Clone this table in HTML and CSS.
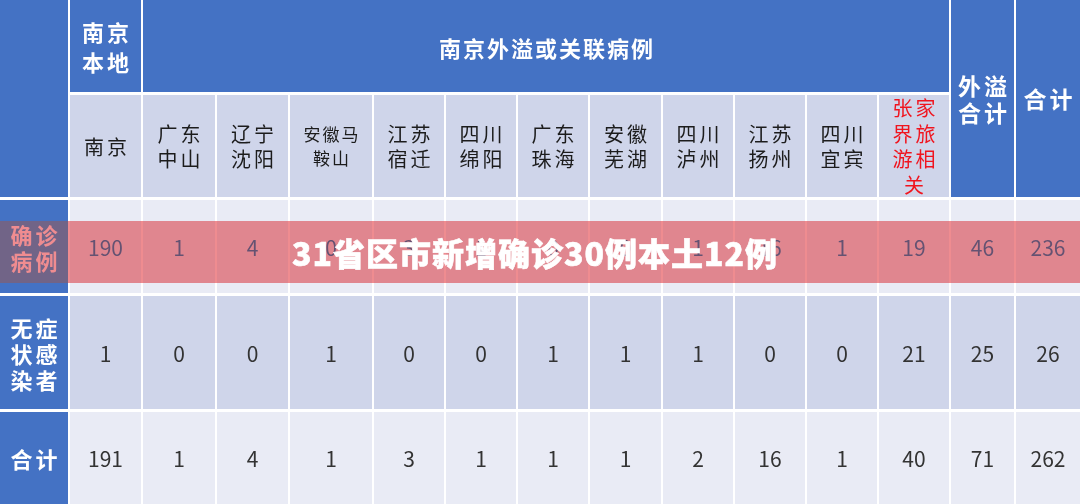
FILE: index.html
```html
<!DOCTYPE html>
<html lang="zh-CN">
<head>
<meta charset="utf-8">
<title>31省区市新增确诊30例本土12例</title>
<link rel="stylesheet" href="styles.css">
</head>
<body>
<div class="stage">
  <div class="table">
    <div class="cell blue corner"></div>
    <div class="cell blue hd">南京<br>本地</div>
    <div class="cell blue hd wide">南京外溢或关联病例</div>
    <div class="cell blue hd tall c14">外溢<br>合计</div>
    <div class="cell blue hd tall c15">合计</div>

    <div class="cell lav sub">南京</div>
    <div class="cell lav sub">广东<br>中山</div>
    <div class="cell lav sub">辽宁<br>沈阳</div>
    <div class="cell lav sub small">安徽马<br>鞍山</div>
    <div class="cell lav sub">江苏<br>宿迁</div>
    <div class="cell lav sub">四川<br>绵阳</div>
    <div class="cell lav sub">广东<br>珠海</div>
    <div class="cell lav sub">安徽<br>芜湖</div>
    <div class="cell lav sub">四川<br>泸州</div>
    <div class="cell lav sub">江苏<br>扬州</div>
    <div class="cell lav sub">四川<br>宜宾</div>
    <div class="cell lav sub red">张家<br>界旅<br>游相<br>关</div>

    <div class="cell blue rh">确诊<br>病例</div>
    <div class="cell light num">190</div>
    <div class="cell light num">1</div>
    <div class="cell light num">4</div>
    <div class="cell light num">0</div>
    <div class="cell light num">3</div>
    <div class="cell light num">1</div>
    <div class="cell light num">0</div>
    <div class="cell light num">0</div>
    <div class="cell light num">1</div>
    <div class="cell light num">16</div>
    <div class="cell light num">1</div>
    <div class="cell light num">19</div>
    <div class="cell light num">46</div>
    <div class="cell light num">236</div>

    <div class="cell blue rh">无症<br>状感<br>染者</div>
    <div class="cell lav num">1</div>
    <div class="cell lav num">0</div>
    <div class="cell lav num">0</div>
    <div class="cell lav num">1</div>
    <div class="cell lav num">0</div>
    <div class="cell lav num">0</div>
    <div class="cell lav num">1</div>
    <div class="cell lav num">1</div>
    <div class="cell lav num">1</div>
    <div class="cell lav num">0</div>
    <div class="cell lav num">0</div>
    <div class="cell lav num">21</div>
    <div class="cell lav num">25</div>
    <div class="cell lav num">26</div>

    <div class="cell blue rh">合计</div>
    <div class="cell light num">191</div>
    <div class="cell light num">1</div>
    <div class="cell light num">4</div>
    <div class="cell light num">1</div>
    <div class="cell light num">3</div>
    <div class="cell light num">1</div>
    <div class="cell light num">1</div>
    <div class="cell light num">1</div>
    <div class="cell light num">2</div>
    <div class="cell light num">16</div>
    <div class="cell light num">1</div>
    <div class="cell light num">40</div>
    <div class="cell light num">71</div>
    <div class="cell light num">262</div>
  </div>
  <div class="banner">
    <div class="tint tint-mult"></div>
    <div class="tint tint-screen"></div>
    <span class="banner-text">31省区市新增确诊30例本土12例</span>
  </div>
</div>
</body>
</html>
```

FILE: styles.css
```css
* { box-sizing: border-box; }
html, body {
  margin: 0;
  padding: 0;
  background: #ffffff;
}
body {
  width: 1080px;
  height: 504px;
  overflow: hidden;
  font-family: "Noto Sans CJK SC", "Noto Sans", sans-serif;
}
.stage {
  width: 1080px;
  height: 504px;
}
.table {
  display: grid;
  grid-template-columns: 68px 71px 72px 71px 82px 70px 70px 70px 71px 70px 70px 70px 70px 63px 64px;
  grid-template-rows: 92px 102px 93px 113px 92px;
  column-gap: 2px;
  row-gap: 3px;
  background: #ffffff;
  width: 1080px;
  height: 504px;
}
.cell {
  display: flex;
  align-items: center;
  justify-content: center;
  text-align: center;
}
.blue { background: #4472c4; color: #ffffff; }
.lav { background: #cfd5ea; }
.light { background: #e9ebf5; }

.corner { grid-row: 1 / span 2; grid-column: 1; }
.hd {
  font-size: 22px;
  font-weight: 700;
  line-height: 30px;
  letter-spacing: 3px;
  padding-left: 3px;
}
.wide {
  grid-column: 3 / span 11;
  letter-spacing: 2px;
  padding-left: 2px;
  padding-top: 2px;
}
.tall {
  grid-row: 1 / span 2;
  line-height: 27px;
  font-size: 23px;
}
.c14 { grid-column: 14; }
.c15 { grid-column: 15; }

.sub {
  font-size: 20px;
  line-height: 25px;
  color: #1c1c1c;
  letter-spacing: 3px;
  padding-left: 3px;
}
.sub.small {
  font-size: 17px;
  line-height: 24px;
  letter-spacing: 2px;
  padding-left: 2px;
}
.sub.red {
  color: #f0141e;
  font-size: 20px;
  line-height: 25.5px;
}

.rh {
  font-size: 22px;
  font-weight: 700;
  line-height: 26px;
  letter-spacing: 3px;
  padding-left: 3px;
}
.num {
  font-size: 21px;
  color: #333333;
  font-family: "Noto Sans CJK SC", "Noto Sans", sans-serif;
  font-weight: 400;
}

/* overlay banner lying over the table */
.banner {
  position: absolute;
  left: 0;
  top: 221px;
  width: 1080px;
  height: 62px;
  display: flex;
  align-items: center;
  padding-left: 292px;
}
.tint {
  position: absolute;
  left: 0;
  top: 0;
  width: 100%;
  height: 100%;
}
.tint-mult {
  background: rgb(234, 99, 65);
  mix-blend-mode: multiply;
}
.tint-screen {
  background: rgb(66, 67, 106);
  mix-blend-mode: screen;
}
.banner-text {
  position: relative;
  color: #ffffff;
  font-size: 32px;
  font-weight: 900;
  letter-spacing: 1px;
  line-height: 1;
  margin-top: 0;
  -webkit-text-stroke: 0.6px #ffffff;
}
```
